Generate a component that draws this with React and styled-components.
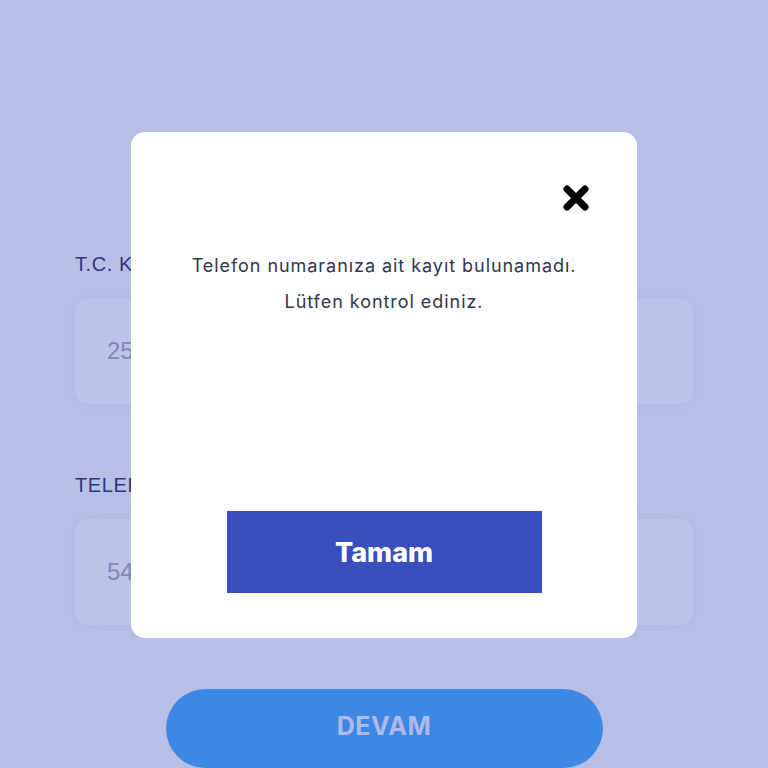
import React from "react";
import styled, { createGlobalStyle } from "styled-components";

const GlobalStyle = createGlobalStyle`
  html, body { margin: 0; padding: 0; }
  body {
    background: #b7bfe6;
    font-family: Inter, "Noto Sans", sans-serif;
    overflow: hidden;
  }
`;

const Page = styled.div`
  width: 768px;
  height: 768px;
  box-sizing: border-box;
  padding: 252px 75px 0;
  display: flex;
  flex-direction: column;
`;

const Label = styled.div`
  font-family: "Liberation Sans", Arial, sans-serif;
  font-size: 20px;
  line-height: 24px;
  letter-spacing: 0.6px;
  color: #2d3877;
  margin-top: ${(p) => p.$top || 0}px;
`;

const Field = styled.div`
  margin-top: 22px;
  height: 107px;
  border-radius: 14px;
  background: #bcc3e8;
  box-shadow: 0 0 12px rgba(150, 160, 210, 0.25);
  display: flex;
  align-items: center;
  padding-left: 32px;
  font-family: "Liberation Sans", Arial, sans-serif;
  font-size: 24px;
  color: #8088b8;
`;

const MainButton = styled.button`
  align-self: center;
  margin-top: 64px;
  width: 437px;
  height: 80px;
  padding: 0 0 4px;
  border: none;
  border-radius: 40px;
  background: #3d87e5;
  color: #aebae9;
  font-family: Inter, sans-serif;
  font-weight: 700;
  font-size: 25px;
  letter-spacing: 0.5px;
`;

const Overlay = styled.div`
  position: fixed;
  inset: 0;
  display: flex;
  align-items: center;
  justify-content: center;
  padding-top: 2px;
`;

const Modal = styled.div`
  width: 506px;
  height: 506px;
  box-sizing: border-box;
  background: #ffffff;
  border-radius: 14px;
  padding: 52px 47px 45px;
  display: flex;
  flex-direction: column;
`;

const Header = styled.div`
  display: flex;
  justify-content: flex-end;
`;

const CloseButton = styled.button`
  width: 28px;
  height: 28px;
  padding: 0;
  border: none;
  background: transparent;
  display: flex;
`;

const Message = styled.p`
  margin: 36px 0 0;
  text-align: center;
  font-size: 18px;
  line-height: 36px;
  letter-spacing: 0.95px;
  color: #30364f;
`;

const OkButton = styled.button`
  margin-top: auto;
  align-self: center;
  width: 315px;
  height: 82px;
  border: none;
  background: #3a4fbe;
  color: #ffffff;
  font-family: Inter, sans-serif;
  font-weight: 800;
  font-size: 27px;
`;

const CloseIcon = () => (
  <svg width="28" height="28" viewBox="0 0 28 28">
    <path
      d="M5 5 L23 23 M23 5 L5 23"
      stroke="#000"
      strokeWidth="7"
      strokeLinecap="round"
      fill="none"
    />
  </svg>
);

export default function App() {
  return (
    <>
      <GlobalStyle />
      <Page>
        <Label>T.C. KİMLİK NUMARASI</Label>
        <Field>25•••••••••</Field>
        <Label $top={69}>TELEFON NUMARASI</Label>
        <Field>54•••••••••</Field>
        <MainButton>DEVAM</MainButton>
      </Page>
      <Overlay>
        <Modal>
          <Header>
            <CloseButton aria-label="Kapat">
              <CloseIcon />
            </CloseButton>
          </Header>
          <Message>
            Telefon numaranıza ait kayıt bulunamadı.
            <br />
            Lütfen kontrol ediniz.
          </Message>
          <OkButton>Tamam</OkButton>
        </Modal>
      </Overlay>
    </>
  );
}
